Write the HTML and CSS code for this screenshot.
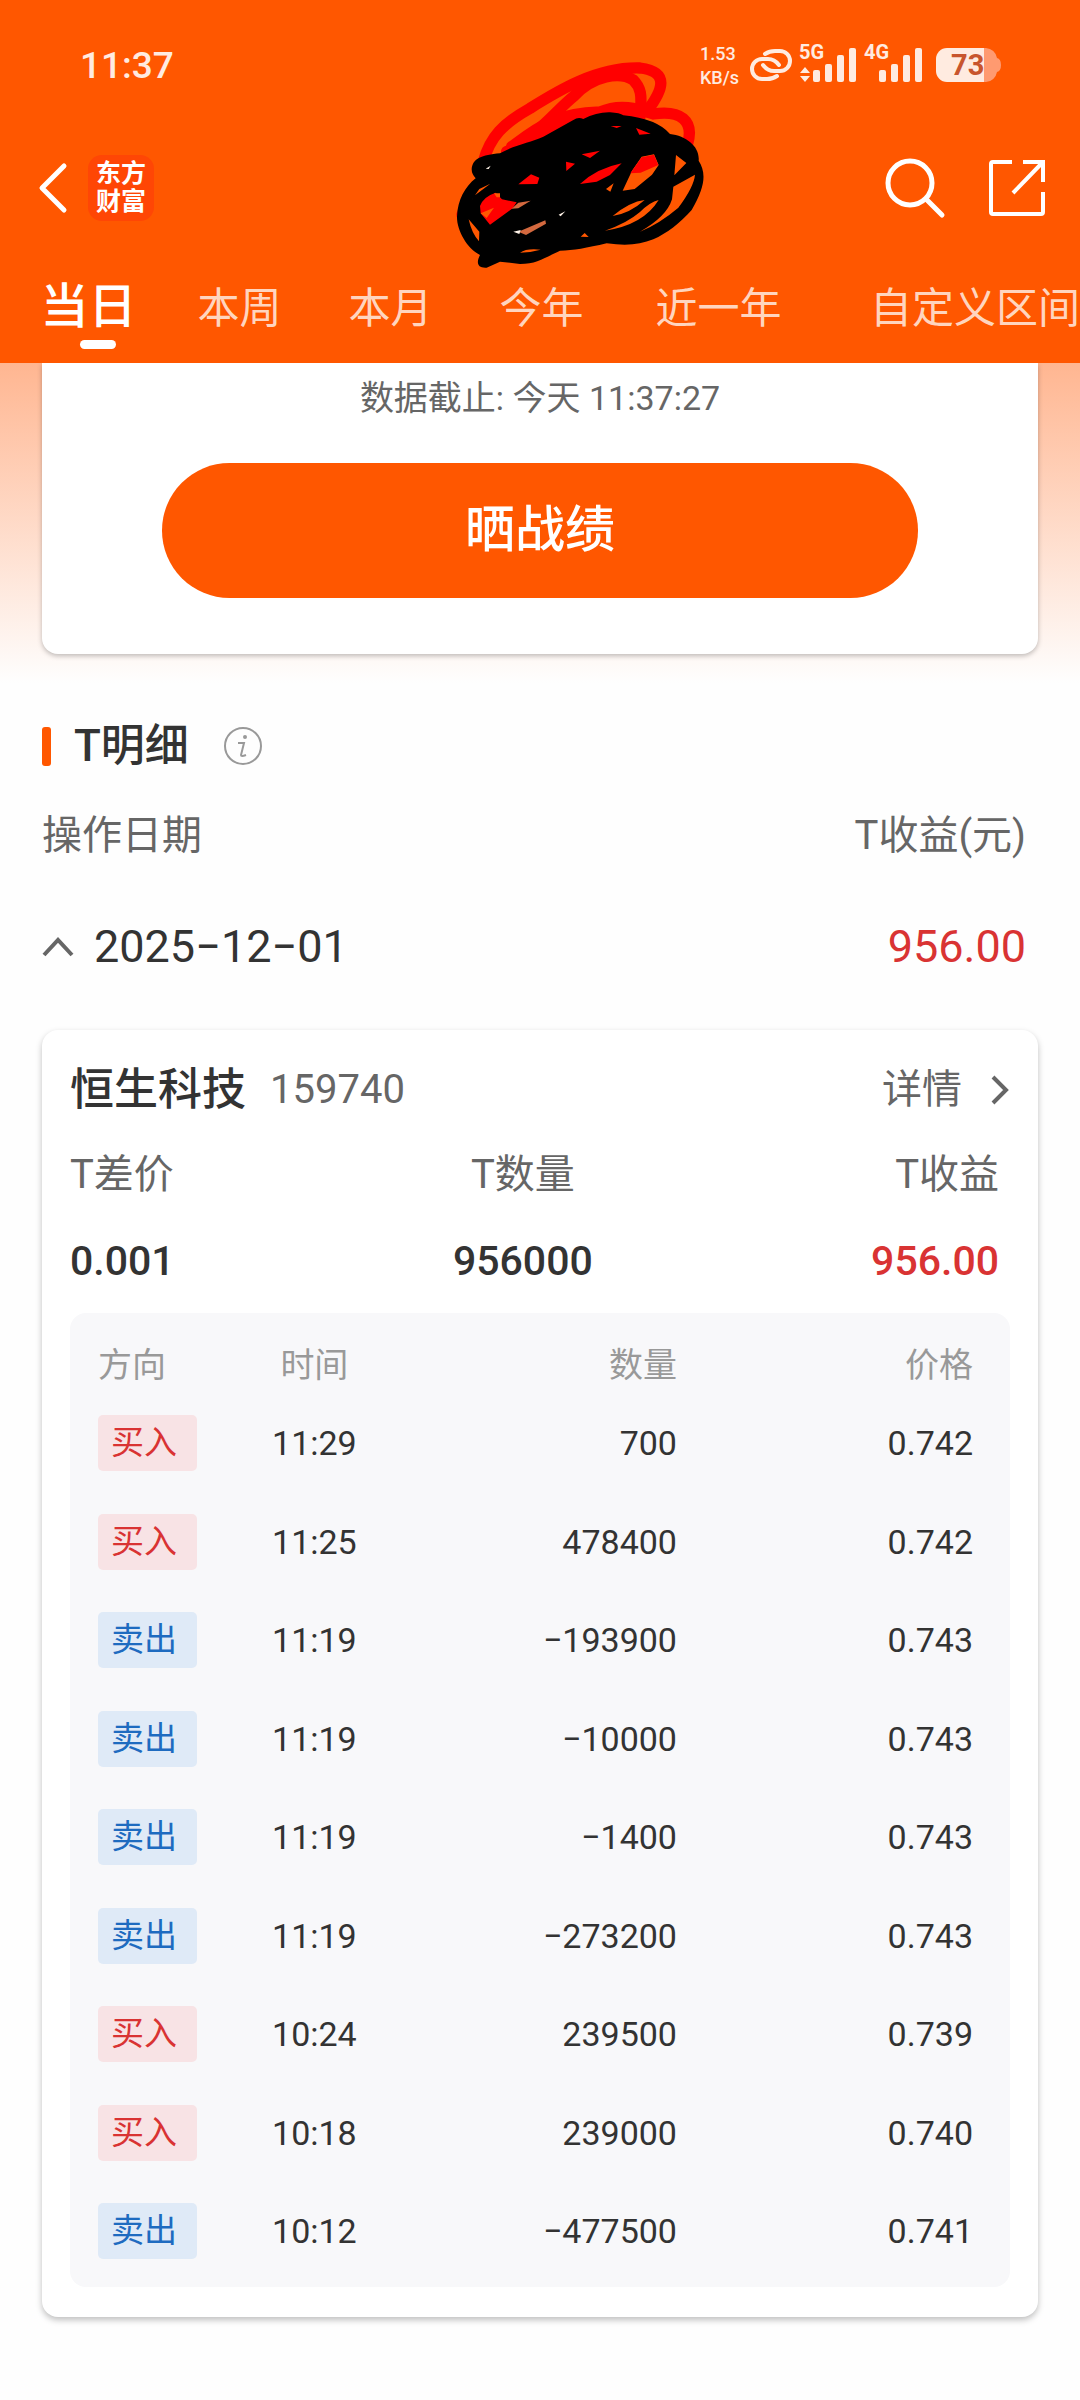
FILE: index.html
```html
<!DOCTYPE html>
<html lang="zh-CN">
<head>
    <meta charset="UTF-8">
    <meta name="viewport" content="width=device-width, initial-scale=1.0">
    <title>T明细</title>
    <link rel="stylesheet" href="styles.css">
</head>
<body>

    <header>
        <!-- Status bar -->
        <div class="status-bar">
            <span class="clock">11:37</span>
            <div class="status-icons">
                <span class="net-speed">1.53<br>KB/s</span>
                <svg class="link-icon" width="42" height="32" viewBox="0 0 42 32" fill="none" stroke="#ffebe0" stroke-width="4" stroke-linecap="round">
                    <path d="M15 5C18 3 21 2 25 2h5a10 10 0 0 1 0 20h-6c-5 0-8-2-11-6"/>
                    <path d="M27 27c-3 2-6 3-10 3h-5a10 10 0 0 1 0-20h6c5 0 8 2 11 6"/>
                </svg>
                <svg class="signal" width="60" height="40" viewBox="0 0 60 40" fill="#ffebe0">
                    <text x="1" y="17">5G</text>
                    <path d="M7 25l5 6H2zM7 40l5-6H2z"/>
                    <rect x="15" y="28" width="7" height="12" rx="2"/>
                    <rect x="27" y="22" width="7" height="18" rx="2"/>
                    <rect x="39" y="13" width="7" height="27" rx="2"/>
                    <rect x="51" y="6" width="7" height="34" rx="2"/>
                </svg>
                <svg class="signal" width="60" height="40" viewBox="0 0 60 40" fill="#ffebe0">
                    <text x="0" y="17">4G</text>
                    <rect x="15" y="28" width="7" height="12" rx="2"/>
                    <rect x="27" y="22" width="7" height="18" rx="2"/>
                    <rect x="39" y="13" width="7" height="27" rx="2"/>
                    <rect x="51" y="6" width="7" height="34" rx="2"/>
                </svg>
                <svg class="battery" width="66" height="34" viewBox="0 0 66 34">
                    <path d="M48 0h2a12 12 0 0 1 11 10q4 1 4 7t-4 7a12 12 0 0 1-11 10h-2z" fill="#ff9a70"/>
                    <path d="M11 0h37v34H11A11 11 0 0 1 0 23V11A11 11 0 0 1 11 0z" fill="#ffebe0"/>
                    <text x="15" y="27">73</text>
                </svg>
            </div>
        </div>

        <!-- App bar -->
        <div class="app-bar">
            <button class="icon-btn" aria-label="返回">
                <svg width="30" height="50" viewBox="0 0 30 50" fill="none" stroke="#fff" stroke-width="5" stroke-linecap="round" stroke-linejoin="round"><path d="M26 3L4 25l22 22"/></svg>
            </button>
            <div class="logo">东方<br>财富</div>
            <button class="icon-btn search" aria-label="搜索">
                <svg width="60" height="60" viewBox="0 0 60 60" fill="none" stroke="#fff" stroke-width="5" stroke-linecap="round"><circle cx="25" cy="25" r="22"/><path d="M42 42l15 15"/></svg>
            </button>
            <button class="icon-btn" aria-label="分享">
                <svg width="58" height="58" viewBox="0 0 58 58" fill="none" stroke="#fff" stroke-width="4"><path d="M24 3H5q-2 0-2 2v48q0 2 2 2h48q2 0 2-2V33M35 3h20v20M54 4L25 34"/></svg>
            </button>
        </div>

        <nav class="tabs">
            <button class="tab active">当日</button>
            <button class="tab">本周</button>
            <button class="tab">本月</button>
            <button class="tab">今年</button>
            <button class="tab wide">近一年</button>
            <button class="tab custom">自定义区间</button>
        </nav>

        <!-- Scribble over the account name -->
        <svg class="scribble" width="280" height="240" viewBox="0 0 840 720">
            <g fill="none" stroke="#f00" stroke-width="34" stroke-linecap="round">
                <path d="M130 365C150 290 190 250 270 205C350 155 470 80 600 84C690 95 670 150 620 215"/>
                <path d="M200 335C290 290 350 210 400 170C460 105 540 95 580 120C610 150 602 180 602 220"/>
                <path d="M215 320C290 265 340 220 480 216C540 190 590 205 640 222C720 210 765 240 742 315"/>
                <path d="M260 320C300 280 340 240 440 232L600 230"/>
                <path d="M66 524L130 500"/>
            </g>
            <path d="M95 388C98 355 125 345 180 340C230 312 270 308 310 290L400 240Q415 229 430 237Q470 216 510 217Q540 219 550 226Q650 236 690 282C740 288 780 320 776 362C800 400 795 440 755 510C720 550 680 580 640 598C600 614 560 618 500 610C440 624 400 632 360 632C310 655 290 672 240 672L180 665L140 683C112 685 108 668 120 645C80 625 50 570 51 530C53 480 75 440 107 415Q95 402 95 388z"/>
            <g fill="#ff5700">
                <path d="M86 538L118 575L117 604Q95 580 86 538zM91 486L118 447L151 431L105 466z"/>
                <path d="M498 447L521 430L511 455zM548 452L576 392L605 350L642 343L656 375L636 404L584 447z"/>
                <path d="M708 345L739 369L703 406zM700 440L765 404Q762 440 715 503Q660 550 600 575Q680 530 696 478z"/>
                <path d="M518 528Q570 485 614 480Q570 520 518 528zM495 572Q560 550 600 516Q630 486 656 480Q610 555 495 572z"/>
                <path d="M240 638Q260 624 302 629Q270 638 240 638zM422 590L434 579L446 591z"/>
            </g>
            <g fill="#f00">
                <path d="M120 498Q130 470 167 458L186 478L230 487L218 505L150 554L122 520z"/>
                <path d="M235 433L273 403L298 413L292 432zM378 365L405 371L379 393zM425 343L480 332L450 354z"/>
                <path d="M420 432Q470 385 545 370L510 405L470 425zM571 400L605 352L642 344L655 375L602 398z"/>
                <path d="M588 264L632 281L598 284zM512 258H545L530 264z"/>
            </g>
            <path d="M122 520L162 503L140 534zM162 460h18v12h-10z" fill="#ff5700"/>
            <path d="M215 506L235 488L272 482L235 505zM235 575L316 541L318 551L258 585z" fill="#d3693f"/>
            <path d="M220 575L242 570L238 582zM356 524L376 514L362 529zM137 386L152 377L146 387z" fill="#fff3e8"/>
        </svg>
    </header>

    <main>
        <section class="share-card">
            <p>数据截止: 今天 11:37:27</p>
            <button class="share-btn">晒战绩</button>
        </section>

        <!-- T detail -->
        <section class="detail">
            <h2>
                <span class="bar"></span>T明细
                <svg width="40" height="40" viewBox="0 0 40 40" fill="none" stroke="#999" stroke-width="2"><circle cx="20" cy="20" r="18"/><circle cx="22" cy="11" r="1" fill="#999"/><path d="M15 17h6l-3 12q0 2 5 0"/></svg>
            </h2>
            <div class="row labels">
                <span>操作日期</span>
                <span>T收益(元)</span>
            </div>
            <div class="row date-row">
                <button class="date-btn">
                    <svg width="32" height="22" viewBox="0 0 32 22" fill="none" stroke="#666" stroke-width="4"><path d="M2 19L16 4l14 15"/></svg>
                    2025−12−01
                </button>
                <span class="red">956.00</span>
            </div>
        </section>

        <section class="stock-card">
            <div class="row stock-head">
                <div class="stock-name"><h3>恒生科技</h3><span>159740</span></div>
                <a class="more" href="#">详情
                    <svg width="20" height="30" viewBox="0 0 20 30" fill="none" stroke="#666" stroke-width="4"><path d="M3 2l13 13L3 28"/></svg>
                </a>
            </div>

            <dl class="stats">
                <div><dt>T差价</dt><dd>0.001</dd></div>
                <div><dt>T数量</dt><dd>956000</dd></div>
                <div><dt>T收益</dt><dd class="red">956.00</dd></div>
            </dl>

            <div class="trades">
                <table>
                    <thead>
                        <tr><th>方向</th><th>时间</th><th>数量</th><th>价格</th></tr>
                    </thead>
                    <tbody>
                        <tr><td><span class="tag buy">买入</span></td><td>11:29</td><td>700</td><td>0.742</td></tr>
                        <tr><td><span class="tag buy">买入</span></td><td>11:25</td><td>478400</td><td>0.742</td></tr>
                        <tr><td><span class="tag sell">卖出</span></td><td>11:19</td><td>−193900</td><td>0.743</td></tr>
                        <tr><td><span class="tag sell">卖出</span></td><td>11:19</td><td>−10000</td><td>0.743</td></tr>
                        <tr><td><span class="tag sell">卖出</span></td><td>11:19</td><td>−1400</td><td>0.743</td></tr>
                        <tr><td><span class="tag sell">卖出</span></td><td>11:19</td><td>−273200</td><td>0.743</td></tr>
                        <tr><td><span class="tag buy">买入</span></td><td>10:24</td><td>239500</td><td>0.739</td></tr>
                        <tr><td><span class="tag buy">买入</span></td><td>10:18</td><td>239000</td><td>0.740</td></tr>
                        <tr><td><span class="tag sell">卖出</span></td><td>10:12</td><td>−477500</td><td>0.741</td></tr>
                    </tbody>
                </table>
            </div>
        </section>
    </main>

</body>
</html>
```
FILE: styles.css
```css
* {
    box-sizing: border-box;
}

body {
    margin: 0;
    background: #fefefe;
    color: #333;
    font-family: Roboto, "Noto Sans CJK SC", sans-serif;
    font-size: 40px;
    line-height: 60px;
    overflow-x: hidden;
}

h2, h3, p, dl, dd {
    margin: 0;
}

button {
    padding: 0;
    border: none;
    background: none;
    color: inherit;
    font: inherit;
    cursor: pointer;
}

svg {
    display: block;
    flex: none;
    overflow: visible;
}

.red {
    color: #d93333;
}

.row {
    display: flex;
    align-items: center;
    justify-content: space-between;
}

/* Header */
header {
    position: relative;
    background: #ff5700;
    color: #fff;
}

.status-bar {
    display: flex;
    justify-content: space-between;
    padding: 42px 78px 0 80px;
    height: 90px;
    color: #ffebe0;
}

.clock {
    font-size: 37px;
    font-weight: 500;
    line-height: 48px;
}

.status-icons {
    display: flex;
    gap: 6px;
}

.net-speed {
    width: 44px;
    font-size: 18px;
    font-weight: 500;
    line-height: 24px;
    white-space: nowrap;
}

.link-icon {
    margin-top: 7px;
}

.signal text {
    font-size: 20px;
    font-weight: 700;
    line-height: 20px;
}

.battery {
    margin: 6px 0 0 6px;
}

.battery text {
    fill: #c8552d;
    font-size: 29px;
    font-weight: 700;
}

.app-bar {
    display: flex;
    align-items: center;
    padding: 65px 34px 0 38px;
}

.icon-btn.search {
    margin: 0 43px 0 auto;
}

.logo {
    margin-left: 20px;
    padding: 5px 8px;
    border-radius: 14px;
    background: #ff4605;
    font-size: 25px;
    font-weight: 700;
    line-height: 28px;
}

.tabs {
    display: flex;
    align-items: baseline;
    padding: 56px 0 24px 13px;
    overflow: hidden;
}

.tab {
    position: relative;
    flex: none;
    width: 151px;
    color: #ffd5bf;
    font-size: 42px;
    white-space: nowrap;
}

.tab.wide {
    width: 203px;
}

.tab.custom {
    width: 310px;
}

.tab.active {
    color: #fff;
    font-size: 48px;
    font-weight: 500;
}

.tab.active::after {
    content: "";
    position: absolute;
    bottom: -12px;
    left: 67px;
    width: 36px;
    height: 9px;
    border-radius: 5px;
    background: #fff;
}

.scribble {
    position: absolute;
    top: 40px;
    left: 440px;
}

/* Share card */
main {
    padding: 0 42px 84px;
    background: linear-gradient(#ffb691, #fefefe 320px);
}

.share-card {
    padding: 5px 120px 56px;
    border-radius: 0 0 16px 16px;
    background: #fff;
    box-shadow: 0 2px 5px rgba(0, 0, 0, 0.25);
    color: #666;
    font-size: 34px;
    text-align: center;
}

.share-btn {
    width: 100%;
    margin-top: 35px;
    border-radius: 68px;
    background: #ff5700;
    color: #fff;
    font-size: 50px;
    font-weight: 500;
    line-height: 135px;
}

/* T detail */
.detail {
    padding-top: 62px;
}

.detail h2 {
    display: flex;
    align-items: center;
    font-size: 44px;
    font-weight: 500;
}

.detail h2 svg {
    margin-left: 34px;
}

.bar {
    width: 9px;
    height: 39px;
    margin-right: 23px;
    border-radius: 3px;
    background: #ff5700;
}

.labels {
    margin-top: 30px;
    padding-right: 12px;
    color: #666;
}

.date-row {
    margin-top: 51px;
    padding-right: 12px;
    font-size: 45px;
}

.date-btn {
    display: flex;
    align-items: center;
    gap: 20px;
}

/* Stock card */
.stock-card {
    margin-top: 53px;
    padding: 30px 28px;
    border-radius: 16px;
    background: #fff;
    box-shadow: 0 3px 6px rgba(0, 0, 0, 0.25);
}

.stock-name {
    display: flex;
    gap: 24px;
    color: #666;
}

.stock-name h3 {
    color: #333;
    font-size: 44px;
    font-weight: 500;
}

.more {
    display: flex;
    align-items: center;
    gap: 28px;
    color: #666;
    text-decoration: none;
}

.stats {
    display: flex;
    justify-content: space-between;
    padding: 25px 11px 22px 0;
    text-align: center;
}

.stats div:first-child {
    text-align: left;
}

.stats div:last-child {
    text-align: right;
}

.stats dt {
    color: #666;
}

.stats dd {
    margin-top: 26px;
    font-size: 41px;
    font-weight: 500;
}

.trades {
    padding: 23px 0 7px;
    border-radius: 16px;
    background: #f8f8fa;
}

table {
    width: 100%;
    border-collapse: collapse;
    table-layout: fixed;
    font-size: 34px;
    line-height: 56px;
    text-align: right;
}

th, td {
    height: 98px;
    padding: 0;
}

th {
    height: 58px;
    color: #999;
    font-size: 34px;
    font-weight: 400;
}

tbody tr:nth-child(even) td {
    height: 99px;
}

th:nth-child(1), td:nth-child(1) {
    width: 18%;
    padding-left: 28px;
    text-align: left;
}

th:nth-child(2), td:nth-child(2) {
    width: 16%;
    text-align: center;
}

th:nth-child(3), td:nth-child(3) {
    width: 31%;
    padding-right: 4px;
}

th:nth-child(4), td:nth-child(4) {
    padding-right: 37px;
}

.tag {
    display: block;
    width: 99px;
    padding-left: 13px;
    border-radius: 5px;
    font-size: 33px;
}

.buy {
    background: #f8e3e5;
    color: #d93333;
}

.sell {
    background: #dfeaf7;
    color: #1e6bc0;
}
```
